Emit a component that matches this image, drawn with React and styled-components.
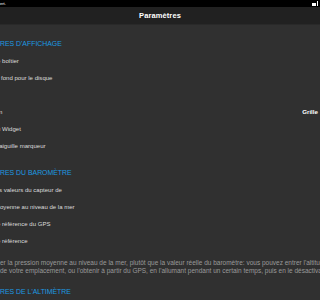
import React from "react";
import styled, { createGlobalStyle } from "styled-components";

const BLUE = "#1d9be2";

const Global = createGlobalStyle`
  html, body {
    margin: 0;
    padding: 0;
    background: #303030;
    overflow: hidden;
  }
  body {
    font-family: "Liberation Sans", Arial, sans-serif;
  }
`;

const Screen = styled.div`
  width: 320px;
  height: 300px;
  display: flex;
  flex-direction: column;
  background: #303030;
  overflow: hidden;
`;

const StatusBar = styled.div`
  height: 7px;
  background: #000;
  display: flex;
  justify-content: space-between;
  align-items: center;
  color: #fff;
  font-size: 4px;
  line-height: 7px;
`;

const NavBar = styled.div`
  height: 19px;
  background: #212121;
  border-bottom: 1px solid #292929;
  display: flex;
  align-items: center;
  justify-content: center;
`;

const Title = styled.div`
  color: #fff;
  font-weight: bold;
  font-size: 7.5px;
  letter-spacing: 0.1px;
`;

const Content = styled.div`
  display: flex;
  flex-direction: column;
`;

const SectionHeader = styled.div`
  padding: ${(p) => p.$top}px 0 3px;
  color: ${BLUE};
  font-size: 6.9px;
  line-height: 10px;
  white-space: nowrap;
`;

const Row = styled.div`
  height: 17px;
  display: flex;
  align-items: center;
  justify-content: space-between;
  white-space: nowrap;
`;

const Label = styled.span`
  color: #dcdcdc;
  font-size: 6.05px;
  margin-left: ${(p) => p.$shift || 0}px;
`;

const Value = styled.span`
  color: #fff;
  font-weight: bold;
  font-size: 6.2px;
  margin-right: 2px;
`;

const Note = styled.div`
  padding-top: 10px;
  color: #9a9a9a;
  font-size: 6.5px;
  line-height: 8px;
  white-space: nowrap;
`;

const Battery = () => (
  <svg width="8" height="7" viewBox="0 0 8 7">
    <rect x="0" y="3" width="4" height="3" fill="#fff" />
    <rect x="5" y="1" width="1" height="5" fill="#fff" />
  </svg>
);

const App = () => {
  return (
    <Screen>
      <Global />
      <StatusBar>
        <span>ert.</span>
        <Battery />
      </StatusBar>
      <NavBar>
        <Title>Paramètres</Title>
      </NavBar>
      <Content>
        <SectionHeader $top={14}>RES D'AFFICHAGE</SectionHeader>
        <Row>
          <Label $shift={-3}>e boîtier</Label>
        </Row>
        <Row>
          <Label $shift={-4}>e fond pour le disque</Label>
        </Row>
        <Row />
        <Row>
          <Label $shift={-1}>n</Label>
          <Value>Grille</Value>
        </Row>
        <Row>
          <Label $shift={-3}>u Widget</Label>
        </Row>
        <Row>
          <Label $shift={-2}>'aiguille marqueur</Label>
        </Row>

        <SectionHeader $top={14}>RES DU BAROMÈTRE</SectionHeader>
        <Row>
          <Label $shift={-1}>s valeurs du capteur de</Label>
        </Row>
        <Row>
          <Label>oyenne au niveau de la mer</Label>
        </Row>
        <Row>
          <Label $shift={-3}>e référence du GPS</Label>
        </Row>
        <Row>
          <Label $shift={-3}>e référence</Label>
        </Row>

        <Note>
          er la pression moyenne au niveau de la mer, plutôt que la valeur réelle du baromètre: vous pouvez entrer l'altitude
          <br />
          de votre emplacement, ou l'obtenir à partir du GPS, en l'allumant pendant un certain temps, puis en le désactivant.
        </Note>

        <SectionHeader $top={12}>RES DE L'ALTIMÈTRE</SectionHeader>
      </Content>
    </Screen>
  );
};

export default App;
